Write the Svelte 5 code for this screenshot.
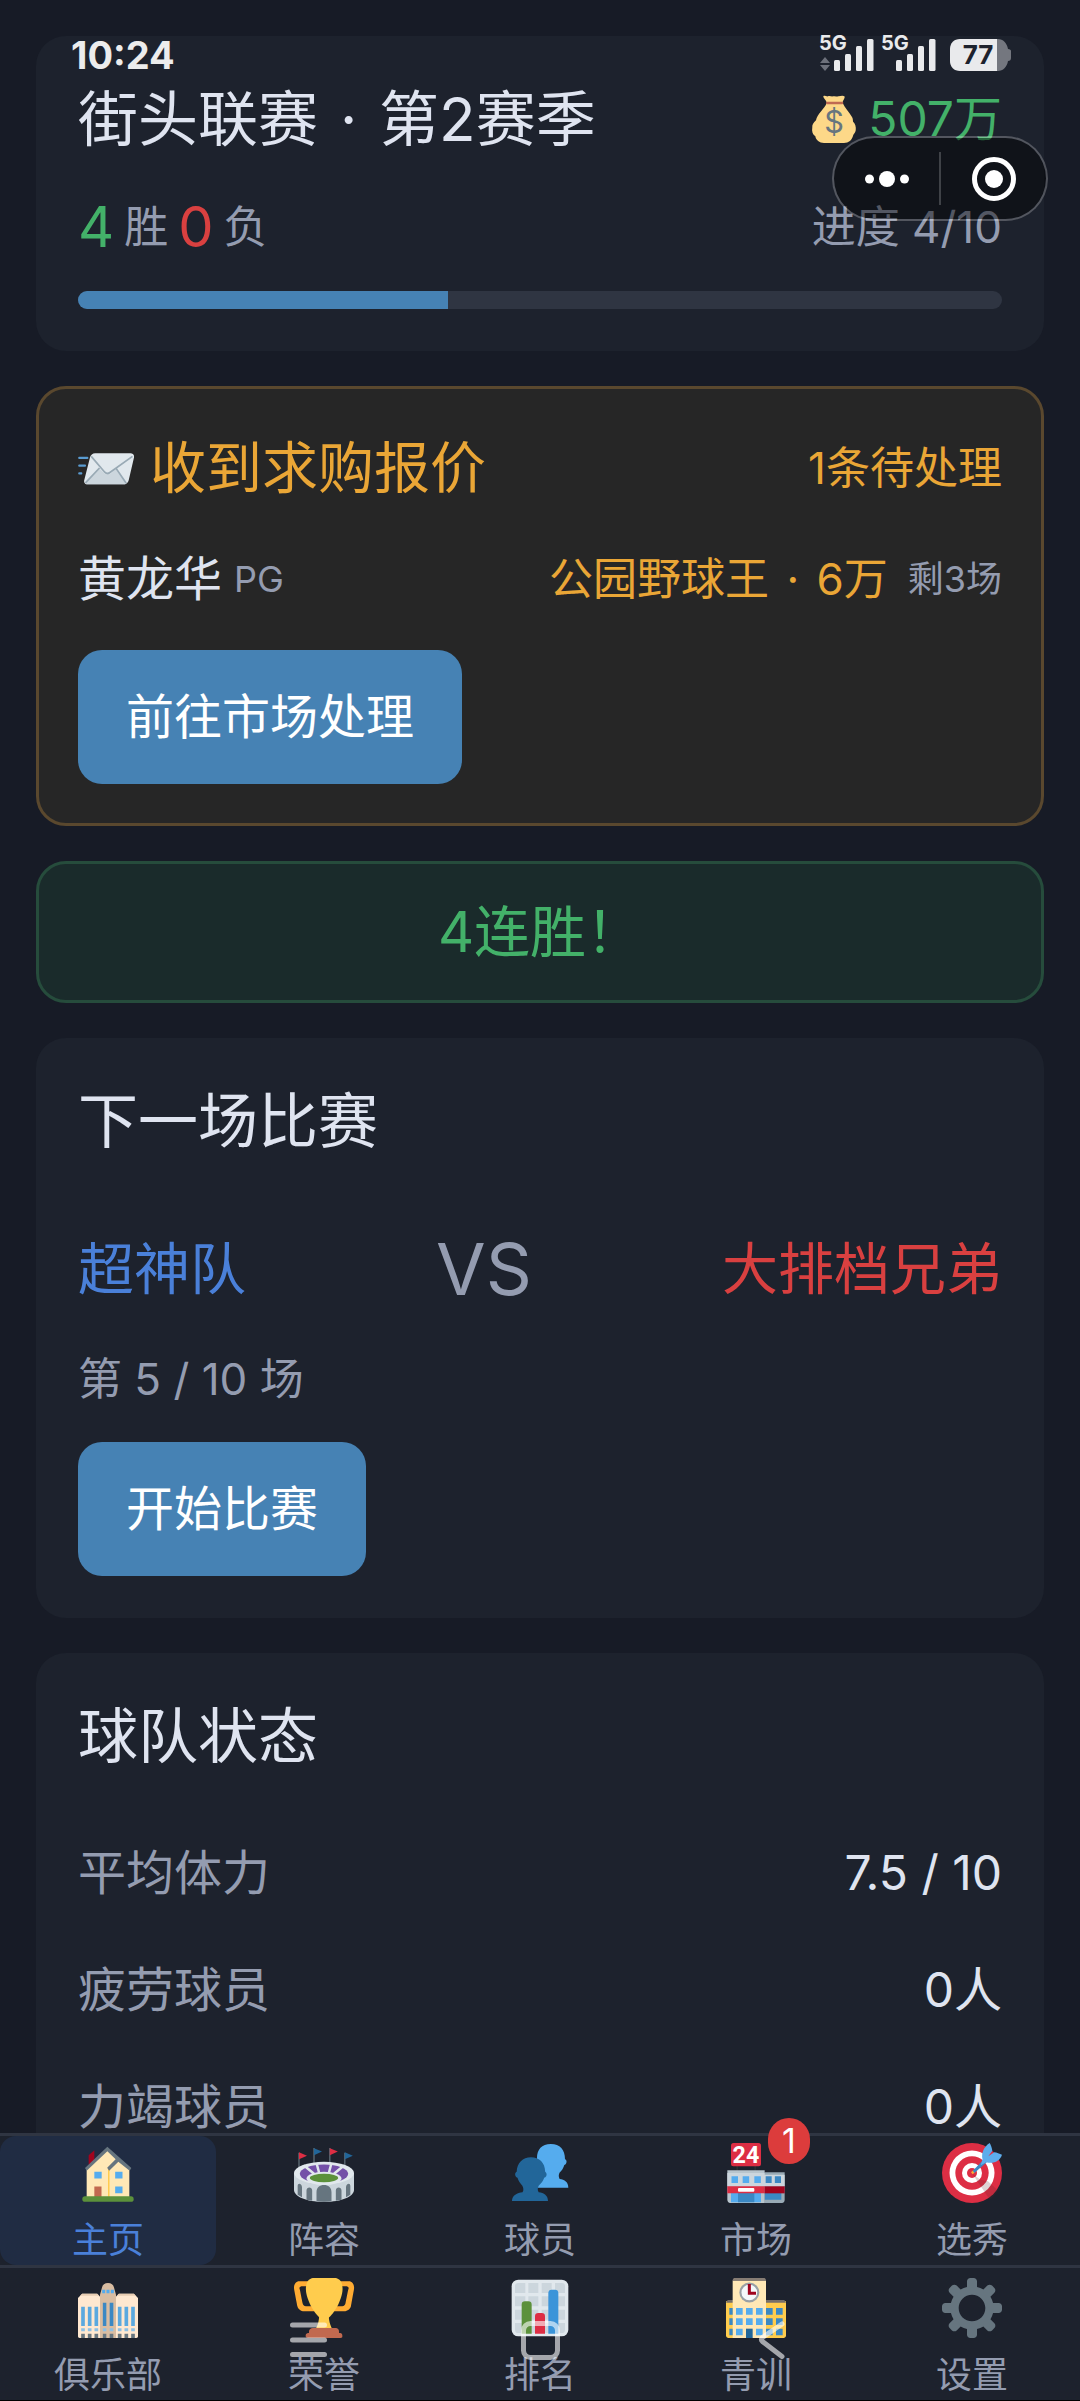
<script>
  let season = $state({
    league: "街头联赛",
    name: "第2赛季",
    money: "507万",
    wins: 4,
    losses: 0,
    played: 4,
    total: 10
  });

  let offers = $state([
    { id: 1, player: "黄龙华", position: "PG", club: "公园野球王", price: "6万", left: 3 }
  ]);

  let nextMatch = $state({ home: "超神队", away: "大排档兄弟", round: 5 });

  const teamStatus = [
    { label: "平均体力", value: "7.5 / 10" },
    { label: "疲劳球员", value: "0人" },
    { label: "力竭球员", value: "0人" }
  ];

  const navRows = [
    [
      { id: "home", label: "主页" },
      { id: "lineup", label: "阵容" },
      { id: "players", label: "球员" },
      { id: "market", label: "市场" },
      { id: "draft", label: "选秀" }
    ],
    [
      { id: "club", label: "俱乐部" },
      { id: "honor", label: "荣誉" },
      { id: "ranking", label: "排名" },
      { id: "youth", label: "青训" },
      { id: "settings", label: "设置" }
    ]
  ];

  let active = $state("home");

  let progress = $derived((season.played / season.total) * 100);
</script>

{#snippet signal(arrows)}
  <svg class="signal" viewBox="0 0 56 38" aria-hidden="true">
    <text x="0" y="16" class="net">5G</text>
    {#if arrows}
      <path fill="#6d717b" d="M6 23l5 6H1zM6 37l5-6H1z" />
    {/if}
    <g fill="#e9eaec">
      <rect x="15" y="26" width="6" height="11" rx="1.5" />
      <rect x="26" y="20" width="6" height="17" rx="1.5" />
      <rect x="37" y="12" width="6" height="25" rx="1.5" />
      <rect x="48" y="5" width="6.500" height="32" rx="1.5" />
    </g>
  </svg>
{/snippet}

{#snippet tabIcon(id)}
  <svg class="tab-icon" viewBox="0 0 36 36" aria-hidden="true">
    {#if id === "home"}
      <path fill="#a0041e" d="M6.400 13V7.300l3.400-3V11z" />
      <path fill="#ffe8b6" d="M5.200 15L17.600 3.200 30.800 15v17.500H5.200z" />
      <path fill="#ffcc4d" d="M18 15.500h.9v17H18z" />
      <path fill="#66757f" d="M17.600 2.300L4.200 15l1 1.600L17.600 5l5 4.700-5.100 5.200 1.200 1.700 5.500-5.300 6.800 5.300 1-1.600z" />
      <path fill="#55acee" d="M9.800 17.300h4.400v4H9.800zM22.300 17.300h4.400v4h-4.400zM22.300 26.100h4.400v4h-4.400z" />
      <path fill="#c1694f" d="M9.800 26.100h4.300v6.400H9.800z" />
      <rect x="2.600" y="32" width="30.800" height="3.300" rx="1.600" fill="#5c913b" />
    {:else if id === "lineup"}
      <path fill="none" stroke="#66757f" stroke-width=".7" d="M3 5.800v9M12 3v9M21.500 3v9M30.500 5.800v9" />
      <path fill="#dd2e44" d="M3 5.600l4.800 2L3 9.800zM21.500 3.100l4.800 2-4.800 2.200z" />
      <path fill="#226699" d="M12 3.100l4.800 2-4.800 2.200zM30.500 5.600l4.800 2-4.800 2.200z" />
      <path fill="#ccd6dd" d="M0 18h36v10c0 4-7 7.300-18 7.300S0 32 0 28z" />
      <ellipse cx="18" cy="18" rx="18" ry="6.700" fill="#e1e8ed" />
      <ellipse cx="18" cy="18.500" rx="14.500" ry="5.600" fill="#7450a8" />
      <path stroke="#e1e8ed" stroke-width="1.500" fill="none" d="M6 13.500l6 5M13.500 12l1.600 6M22.500 12l-1.600 6M30 13.500l-6 5" />
      <ellipse cx="18" cy="21.300" rx="10.500" ry="4" fill="#e1e8ed" />
      <ellipse cx="18" cy="21" rx="8.500" ry="2.500" fill="#5c913b" />
      <path fill="#66757f" d="M13.500 35V29.500c0-2.800 2-4.300 4.500-4.300s4.500 1.500 4.500 4.300V35c-3 .3-6 .3-9 0zM7.500 34v-5.500c0-2.500 3.400-2.500 3.400 0v6.200zM25.100 34.700v-6.200c0-2.500 3.400-2.500 3.400 0V34zM2.200 31v-5.200c0-2.200 2.600-1.500 2.600.8V32.600zM31.200 32.600v-6c0-2.300 2.600-3 2.600-.8V31z" />
    {:else if id === "players"}
      <path fill="#55acee" d="M35 26.800c0-3.400-2.300-4.800-5.200-5.200-.8-1.300-.6-2.600-.1-3.700 1.400-1.300 2.400-3 2.900-4.700.9-.2 1.500-1.300 1.300-2.400-.1-.6-.8-1-.9-1.200C33 4 30 .6 24.500.6 19 .6 16.200 4 16.200 9v17.800z" />
      <path fill="#226699" d="M22.800 34.800c0-3.500-2.400-4.900-5.600-5.300-.9-1.400-.5-2.900.1-4 1.500-1.400 2.600-2.900 3.200-4.700 1-.3 1.700-1.300 1.400-2.400-.1-.7-.6-.9-.8-1.200-.1-5.300-3.500-8.600-8.500-8.600S4.200 12 4 17.300c-.3.300-.8.500-.9 1.200-.2 1.100.5 2.100 1.400 2.400.6 1.800 1.500 3.300 2.900 4.700.6 1.100 1 2.600.1 4-3.100.4-6.300 1.700-6.300 5.200z" />
    {:else if id === "market"}
      <path fill="#292f33" d="M6.200 13h1v4h-1zM17 13h1v4h-1z" />
      <rect x="3" y="0" width="18" height="14" rx="1.500" fill="#dd2e44" />
      <text x="12" y="12" class="sign">24</text>
      <path fill="#99aab5" d="M23 17.600h12.200V34c0 1-.6 2-1.600 2H23z" />
      <path fill="#b8c5cd" d="M.8 16.300h22.400V36H2.500C1.500 36 .8 35 .8 34z" />
      <path fill="#ccd6dd" d="M.8 18h22.400v8H.8zM23.200 19h12v7h-12z" />
      <path fill="#55acee" d="M3.300 20h3.900v4H3.300zM10 20h3.900v4H10zM17 20h3.900v4H17zM3 30h18v5.500H3z" />
      <path fill="#3b88c3" d="M23.800 20h3.600v4h-3.600zM29.300 20h3.700v4h-3.700zM7.200 30H17v5.500H7.200zM23.300 30h9.900v4h-9.900z" />
      <path fill="#dd2e44" d="M.8 26h22.400v4.200H.8z" />
      <path fill="#a0041e" d="M23.200 26h12v4.200h-12z" />
      <rect x="7.200" y="27" width="9.800" height="2.200" rx=".6" fill="#fff" />
    {:else if id === "draft"}
      <circle cx="18" cy="18" r="18" fill="#dd2e44" />
      <circle cx="18" cy="18" r="13.500" fill="#fff" />
      <circle cx="18" cy="18" r="10" fill="#dd2e44" />
      <circle cx="18" cy="18" r="6" fill="#fff" />
      <circle cx="18" cy="18" r="3" fill="#dd2e44" />
      <path fill="#58222a" opacity=".2" d="M18.200 18.500l10.500 15.500c2-1.400 3.700-3.300 4.900-5.500l-6-5.500-4.500-1z" />
      <path fill="#ffac33" d="M17.400 17.500l1.700-1.500 1 1.200-1.700 1.500z" />
      <path fill="#3b88c3" d="M18.500 16.700l6.700-6.900 1.800 1.600-7.600 6.600z" />
      <path fill="#5dadec" d="M24.300 9.700c-.8-3.500.6-7.300 4.300-9.700.8 1.400 1.400 3 1.600 4.600l-2.400 3.300 3.500-2.400c1.500.2 3.300.8 4.700 1.600-1.400 4.200-5.500 5.600-9.500 4.400l-3.300 1.800z" />
    {:else if id === "club"}
      <path fill="#ffe8d0" d="M0 12l2.500-2.600h9L14 12v24H1c-.6 0-1-.4-1-1zM22 12l2.500-2.600h9L36 12v23c0 .6-.4 1-1 1H22z" />
      <path fill="#e8cdb2" d="M1.200 10.700l1.300-1.300h9l1.300 1.300zM23.200 10.700l1.300-1.300h9l1.300 1.300z" />
      <path fill="#d9bda2" d="M13.200 10l1.200-4.300C14.800 4 16 3 18 3s3.200 1 3.600 2.700L22.800 10v26h-9.600z" />
      <path fill="#55acee" d="M14.500 7h1.800v2.200h-1.800zM17.100 7h1.800v2.200h-1.800zM19.700 7h1.800v2.200h-1.800z" />
      <path fill="#5ba9df" d="M1.900 17.200h2.200v11.600H1.900zM5.900 17.200h2.200v11.600H5.900zM9.900 17.200h2.200v11.600H9.900zM23.900 17.200h2.200v11.600h-2.200zM27.900 17.200h2.200v11.600h-2.200zM31.900 17.200h2.200v11.600h-2.200z" />
      <path fill="#3b88c3" d="M14.900 14.800H17v14h-2.100zM19 14.800h2.200v14H19z" />
      <path fill="#8ec0e4" d="M1.900 30.200h2.200v1.700H1.900zM5.900 30.200h2.200v1.700H5.900zM9.900 30.200h2.200v1.700H9.900zM23.900 30.200h2.200v1.700h-2.200zM27.900 30.200h2.200v1.700h-2.200zM31.900 30.200h2.200v1.700h-2.200zM14.900 30.200H17v1.700h-2.100zM19 30.200h2.200v1.700H19z" />
      <path fill="#66757f" d="M1.900 33.500h2.200V36H1.900zM5.900 33.500h2.200V36H5.900zM9.900 33.500h2.200V36H9.900zM14.900 33.500H17V36h-2.100zM19 33.500h2.200V36H19zM23.900 33.500h2.200V36h-2.200zM27.900 33.500h2.200V36h-2.200zM31.900 33.500h2.200V36h-2.200z" />
    {:else if id === "honor"}
      <path fill="#ffac33" d="M5.123 5h6C12.227 5 13 4.896 13 6V4c0-1.104-.773-2-1.877-2h-8c-2 0-3.583 2.125-3 5 0 0 1.791 9.375 1.917 9.958C2.373 18.500 4.164 20 6.081 20h6.958c1.105 0-.039-1.896-.039-3v-2c0 1.104-.773 2-1.877 2h-4c-1.104 0-1.833-1.042-2-2S3.539 7 3.539 7C2.873 5.750 3.539 5 5.123 5zm25.812 0h-6C23.831 5 22 4.896 22 6V4c0-1.104 1.831-2 2.935-2h8c2 0 3.584 2.125 3 5 0 0-1.633 9.419-1.771 10-.354 1.500-2.042 3-4 3h-7.146C21.914 20 22 18.104 22 17v-2c0 1.104 1.831 2 2.935 2h4c1.104 0 1.834-1.042 2-2s1.584-8 1.584-8C33.184 5.750 32.519 5 30.935 5z" />
      <path fill="#ffcc4d" d="M20.832 22c0-6.958-2.709 0-2.709 0s-3-6.958-3 0-3.291 10-3.291 10h12.292s-3.292-3.042-3.292-10z" />
      <path fill="#ffcc4d" d="M29.123 6.577c0 6.775-6.770 18.423-11 18.423-4.231 0-11-11.648-11-18.423 0-5.582 3-6.577 5-6.577h12c2 0 5 .995 5 6.577z" />
      <path fill="#c1694f" d="M27 33H9v-1c0-1.104 1.164-2 2.206-2h13.917c1.042 0 1.877.896 1.877 2v1z" />
      <path fill="#c1694f" d="M29 34.625c0 .760.165 1.375-1.252 1.375H8.498C7.206 36 7 35.385 7 34.625v-.25C7 33.615 7.738 33 8.498 33h19.250c.759 0 1.252.615 1.252 1.375v.25z" />
    {:else if id === "ranking"}
      <rect x="1" y="1" width="34" height="34" rx="4" fill="#e1e8ed" />
      <path fill="#ccd6dd" d="M5 3h4.200v6H3V5a2 2 0 0 1 2-2zM11 3h6v6h-6zM19 3h6v6h-6zM27 3h4a2 2 0 0 1 2 2v4h-6zM3 11h6.200v6H3zM11 11h6v6h-6zM19 11h6v6h-6zM27 11h6v6h-6zM3 19h6.200v6H3zM11 19h6v6h-6zM19 19h6v6h-6zM27 19h6v6h-6zM3 27h6.200v6H5a2 2 0 0 1-2-2zM11 27h6v6h-6zM19 27h6v6h-6zM27 27h6v4a2 2 0 0 1-2 2h-4z" />
      <path fill="#5c913b" d="M13 33.500H7V16a2 2 0 0 1 2-2h2a2 2 0 0 1 2 2z" />
      <path fill="#dd2e44" d="M21 33.500h-6V23a2 2 0 0 1 2-2h2a2 2 0 0 1 2 2z" />
      <path fill="#3b94d9" d="M29 33.500h-6V9a2 2 0 0 1 2-2h2a2 2 0 0 1 2 2z" />
    {:else if id === "youth"}
      <path fill="#ffcc4d" d="M0 14h36v20.500c0 .8-.7 1.500-1.500 1.500h-33C.7 36 0 35.300 0 34.500z" />
      <path fill="#776f68" d="M1 13.200h34l1 1.600H0z" />
      <path fill="#ffe8b6" d="M4 1.500h20V36H4z" />
      <path fill="#877d74" d="M5 0h18c.6 0 1 .9 1 1.700H4C4 .9 4.400 0 5 0z" />
      <circle cx="14" cy="8.700" r="6" fill="#99a0a5" />
      <circle cx="14" cy="8.700" r="4.700" fill="#f5f8fa" />
      <path fill="none" stroke="#a0041e" stroke-width="1.800" d="M14 3.600v5.500h4" />
      <path fill="#55acee" d="M6 18h4v4H6zM12 18h4v4h-4zM18 18h4v4h-4zM6 24.200h4v4H6zM12 24.200h4v4h-4zM18 24.200h4v4h-4zM6 30.400h4v4H6zM18 30.400h4v4h-4z" />
      <path fill="#3b88c3" d="M2 18h2v4H2zM24 18h4v4h-4zM30 18h4v4h-4zM2 24.200h2v4H2zM24 24.200h4v4h-4zM30 24.200h4v4h-4zM2 30.400h2v4H2zM24 30.400h4v4h-4zM30 30.400h4v4h-4z" />
      <path fill="#226699" d="M12 30.400h4V36h-4z" />
    {:else}
      <path fill="#66757f" d="M34 15h-3.362c-.324-1.369-.864-2.651-1.582-3.814l2.379-2.379c.781-.781.781-2.048 0-2.829l-1.414-1.414c-.781-.781-2.047-.781-2.828 0l-2.379 2.379C23.650 6.225 22.369 5.686 21 5.362V2c0-1.104-.896-2-2-2h-2c-1.104 0-2 .896-2 2v3.362c-1.369.324-2.651.864-3.814 1.582L8.808 4.565c-.781-.781-2.048-.781-2.828 0L4.565 5.979c-.781.781-.781 2.048-.001 2.829l2.379 2.379C6.225 12.350 5.686 13.632 5.362 15H2c-1.104 0-2 .896-2 2v2c0 1.104.896 2 2 2h3.362c.324 1.368.864 2.650 1.582 3.813l-2.379 2.379c-.780.780-.780 2.048.001 2.829l1.414 1.414c.780.780 2.047.780 2.828 0l2.379-2.379c1.163.719 2.445 1.258 3.814 1.582V34c0 1.104.896 2 2 2h2c1.104 0 2-.896 2-2v-3.362c1.368-.324 2.650-.864 3.813-1.582l2.379 2.379c.781.781 2.047.781 2.828 0l1.414-1.414c.781-.781.781-2.048 0-2.829l-2.379-2.379c.719-1.163 1.258-2.445 1.582-3.814H34c1.104 0 2-.896 2-2v-2C36 15.896 35.104 15 34 15zM18 26c-4.418 0-8-3.582-8-8s3.582-8 8-8 8 3.582 8 8-3.582 8-8 8z" />
    {/if}
  </svg>
{/snippet}

<div class="screen">
  <main class="content">
    <section class="card">
      <div class="row">
        <h1>{season.league} <span class="dot">·</span> {season.name}</h1>
        <span class="money">
          <svg class="bag" viewBox="0 0 36 36" aria-hidden="true">
            <path fill="#fdd888" d="M10 1c1-1 2.300.3 3.500 0 1.500-.6 2.500.4 4 0 1.500-.5 2.500.4 4 0 1.300-.3 3.500-1 4.500.2.300 1.300-1.200 2.600-1.600 4.300h-12C12 3.700 9.800 2.300 10 1z" />
            <path fill="#fdd888" d="M12.500 6h12c1.500 3.500 5 7 7 10.500.8 1.300.6 2.500.8 3.500 1.500 1.300 2.400 3.600 2 6.500-.3 2-1.600 2.600-1.900 3.700C31.500 34 29 36 25.500 36h-15C7 36 4.500 34 4 31c-2-1.300-2.800-4-2.300-6.500C1.500 22.300 2.600 21 4.500 19c.8-5 6.500-8.500 8-13z" />
            <rect x="12" y="5" width="13" height="2" rx="1" fill="#bf6952" />
            <text x="18" y="28.500" class="dollar">$</text>
          </svg>
          {season.money}
        </span>
      </div>
      <div class="row record">
        <div class="score">
          <span class="num win">{season.wins}</span>
          <span>胜</span>
          <span class="num loss">{season.losses}</span>
          <span>负</span>
        </div>
        <span>进度 {season.played}/{season.total}</span>
      </div>
      <div class="bar" role="progressbar" aria-label="进度" aria-valuenow={progress} aria-valuemin="0" aria-valuemax="100">
        <div class="fill" style="width: {progress}%"></div>
      </div>
    </section>

    <section class="card offer">
      <div class="row">
        <h2>
          <svg class="mail" viewBox="0 0 36 36" aria-hidden="true">
            <path fill="#e1e8ed" d="M11 8.500h22.800c1.600 0 2.500 1.200 2.200 2.700l-3.400 14.600c-.4 1.600-1.700 2.700-3.300 2.700H6c-1.500 0-2.400-1.200-2-2.700l3.700-14.600c.4-1.600 1.700-2.700 3.300-2.700z" />
            <path fill="#ccd6dd" d="M4.600 27.600L13.500 18l3.300 3.300c1.200 1.100 3 1.200 4.300.2l3.900-3.300 5.600 9.900c-.4.200-.8.400-1.300.4H6c-.6 0-1-.3-1.400-.9z" />
            <path fill="none" stroke="#99aab5" stroke-width="1.100" d="M8.500 10.500l8.700 10.200c.9.900 2.300 1 3.300.2L35 10.500M4.800 27.600L13.800 18M31 27.800l-6.400-9.400" />
            <path fill="none" stroke="#5a9bd0" stroke-width="1.400" stroke-linecap="round" d="M.8 11.500h5.200M.8 16.500h3.700M.8 21.500h1.300" />
          </svg>
          收到求购报价
        </h2>
        <span>{offers.length}条待处理</span>
      </div>
      {#each offers as offer (offer.id)}
        <div class="row offer-row">
          <div class="player">
            <span class="name">{offer.player}</span>
            <span class="small">{offer.position}</span>
          </div>
          <div class="bid">
            <span>{offer.club} <span class="dot">·</span> {offer.price}</span>
            <span class="small">剩{offer.left}场</span>
          </div>
        </div>
      {/each}
      <button class="btn">前往市场处理</button>
    </section>

    <section class="card streak">4连胜！</section>

    <section class="card">
      <h1>下一场比赛</h1>
      <div class="row match">
        <span class="home">{nextMatch.home}</span>
        <span class="vs">VS</span>
        <span class="away">{nextMatch.away}</span>
      </div>
      <p class="round">第 {nextMatch.round} / {season.total} 场</p>
      <button class="btn">开始比赛</button>
    </section>

    <section class="card">
      <h1>球队状态</h1>
      <dl>
        {#each teamStatus as item}
          <div class="row">
            <dt>{item.label}</dt>
            <dd>{item.value}</dd>
          </div>
        {/each}
      </dl>
    </section>
  </main>

  <nav>
    {#each navRows as tabs}
      <div class="tabs">
        {#each tabs as tab (tab.id)}
          <a
            href="#{tab.id}"
            class="tab"
            class:active={active === tab.id}
            onclick={() => (active = tab.id)}
          >
            <span class="icon-wrap">
              {@render tabIcon(tab.id)}
              {#if tab.id === "market" && offers.length}
                <span class="badge">{offers.length}</span>
              {/if}
            </span>
            {tab.label}
          </a>
        {/each}
      </div>
    {/each}
  </nav>

  <!-- phone status bar -->
  <div class="status">
    <span class="time">10:24</span>
    <div class="indicators">
      {@render signal(true)}
      {@render signal(false)}
      <svg class="battery" viewBox="0 0 61 34" aria-hidden="true">
        <path fill="#74777f" d="M47 1h1c5 0 9 4 10 10 2 0 3 1 3 2v7c0 2-1 3-3 3-1 6-5 10-10 10h-1z" />
        <path fill="#e9eaec" d="M10 1h37v32H10C4 33 0 29 0 23V11C0 5 4 1 10 1z" />
        <text x="28" y="26" class="level">77</text>
      </svg>
    </div>
  </div>

  <!-- mini program menu -->
  <div class="capsule">
    <button aria-label="更多">
      <svg viewBox="0 0 44 44" aria-hidden="true">
        <circle cx="4.500" cy="22" r="4.500" />
        <circle cx="22" cy="22" r="8" />
        <circle cx="39.500" cy="22" r="4.500" />
      </svg>
    </button>
    <button aria-label="关闭">
      <svg viewBox="0 0 44 44" aria-hidden="true">
        <circle cx="22" cy="22" r="19.500" class="ring" />
        <circle cx="22" cy="22" r="9" />
      </svg>
    </button>
  </div>

  <!-- system navigation keys -->
  <div class="keys">
    <svg viewBox="0 0 40 40" aria-hidden="true"><path d="M4.500 5h32M4.500 20h32M4.500 34.500h32" /></svg>
    <svg viewBox="0 0 40 40" aria-hidden="true"><rect x="3.500" y="3.500" width="34" height="34" rx="7" /></svg>
    <svg viewBox="0 0 40 40" aria-hidden="true"><path d="M30 4L10.500 17.500q-2 2 0 4L30 36.500" /></svg>
  </div>
</div>

<style>
  :global(body) {
    background: #171b26;
  }

  .screen {
    position: relative;
    display: flex;
    flex-direction: column;
    height: 100vh;
    overflow: hidden;
    background: #171b26;
    color: #dfe4f0;
    font-family: Inter, "Noto Sans CJK SC", sans-serif;
    font-size: 44px;
    line-height: 62px;
  }

  .content {
    flex: 1;
    min-height: 0;
    overflow: hidden;
    display: flex;
    flex-direction: column;
    gap: 35px;
    padding: 36px 36px 0;
  }

  .card {
    flex-shrink: 0;
    padding: 42px;
    border-radius: 30px;
    background: #1d222d;
  }

  .row {
    display: flex;
    align-items: center;
    justify-content: space-between;
  }

  h1,
  h2,
  p,
  dl,
  dd {
    margin: 0;
    font-weight: 400;
  }

  h1 {
    font-size: 60px;
    line-height: 82px;
  }

  h2 {
    display: flex;
    align-items: center;
    gap: 16px;
    font-size: 56px;
    line-height: 80px;
  }

  .dot {
    margin: 0 5px;
  }

  .money {
    display: flex;
    align-items: center;
    gap: 10px;
    color: #43b169;
    font-size: 48px;
  }

  .bag {
    width: 48px;
    height: 48px;
  }

  .mail {
    width: 56px;
    height: 56px;
  }

  .dollar {
    fill: #67757f;
    font-size: 23px;
    text-anchor: middle;
  }

  .record {
    margin: 29px 0 26px;
    color: #949cb0;
    line-height: 76px;
  }

  .score {
    display: flex;
    gap: 10px;
  }

  .num {
    font-size: 56px;
  }

  .win {
    color: #43b169;
  }

  .loss {
    color: #d94040;
  }

  .bar {
    height: 18px;
    border-radius: 9px;
    background: #2f3542;
    overflow: hidden;
  }

  .fill {
    height: 100%;
    background: #4682b4;
  }

  .offer {
    padding: 39px;
    border: 3px solid #5a482e;
    background: #262626;
    color: #eaa636;
  }

  .offer-row {
    margin: 37px 0;
    line-height: 68px;
  }

  .player {
    display: flex;
    gap: 12px;
  }

  .bid {
    display: flex;
    gap: 20px;
  }

  .name {
    color: #dfe4f0;
    font-size: 48px;
  }

  .small {
    color: #949cb0;
    font-size: 36px;
  }

  .btn {
    display: block;
    padding: 33px 48px;
    border: 0;
    border-radius: 24px;
    background: #4682b4;
    color: #fff;
    font-family: inherit;
    font-size: 48px;
    line-height: 68px;
  }

  .streak {
    padding: 28px;
    border: 3px solid #264c3c;
    background: #1a2b2b;
    color: #43b169;
    font-size: 56px;
    line-height: 80px;
    text-align: center;
  }

  .match {
    margin: 57px 0 29px;
    font-size: 56px;
    line-height: 100px;
  }

  .home {
    color: #4a80d9;
  }

  .vs {
    color: #949cb0;
    font-size: 72px;
  }

  .away {
    color: #d94040;
  }

  .round {
    margin-bottom: 32px;
    color: #949cb0;
  }

  dl {
    margin-top: 37px;
    font-size: 48px;
    line-height: 117px;
  }

  dt {
    color: #949cb0;
  }

  nav {
    flex-shrink: 0;
    border-bottom: 1px solid #000;
    background: #1d222d;
  }

  .tabs {
    display: flex;
    border-top: 3px solid #2f3542;
  }

  .tabs + .tabs {
    padding-top: 3px;
  }

  .tab {
    flex: 1;
    display: flex;
    flex-direction: column;
    align-items: center;
    gap: 12px;
    padding-top: 7px;
    border-radius: 16px;
    color: #949cb0;
    font-size: 36px;
    line-height: 50px;
    text-decoration: none;
  }

  .tab.active {
    background: #202c43;
    color: #4a80d9;
  }

  .icon-wrap {
    position: relative;
    height: 60px;
  }

  .tab-icon {
    display: block;
    width: 60px;
    height: 60px;
    overflow: visible;
  }

  .sign {
    fill: #fff;
    font-family: Roboto, sans-serif;
    font-size: 14px;
    font-weight: 700;
    text-anchor: middle;
  }

  .badge {
    position: absolute;
    top: -25px;
    left: 42px;
    width: 42px;
    border-radius: 23px;
    background: #dc3c3c;
    color: #fff;
    font-size: 34px;
    line-height: 46px;
    text-align: center;
  }

  .status {
    position: absolute;
    top: 0;
    left: 0;
    right: 0;
    display: flex;
    align-items: flex-end;
    justify-content: space-between;
    padding: 34px 69px 0 71px;
  }

  .time {
    color: #ececec;
    font-size: 38px;
    font-weight: 700;
    line-height: 34px;
  }

  .indicators {
    display: flex;
    align-items: flex-end;
    gap: 6px;
  }

  .signal {
    width: 56px;
    height: 38px;
    overflow: visible;
  }

  .net {
    fill: #e9eaec;
    font-size: 20px;
    font-weight: 700;
  }

  .battery {
    width: 61px;
    height: 34px;
    margin-left: 7px;
  }

  .level {
    fill: #1d222d;
    font-size: 26px;
    font-weight: 700;
    text-anchor: middle;
  }

  .capsule {
    position: absolute;
    top: 136px;
    right: 32px;
    display: flex;
    width: 216px;
    height: 85px;
    box-sizing: border-box;
    padding: 14px 0;
    border: 2px solid rgba(255, 255, 255, 0.24);
    border-radius: 43px;
    background: rgba(0, 0, 0, 0.44);
    background-clip: padding-box;
  }

  .capsule button {
    flex: 1;
    display: flex;
    align-items: center;
    justify-content: center;
    padding: 0;
    border: 0;
    background: none;
  }

  .capsule button + button {
    border-left: 2px solid rgba(255, 255, 255, 0.2);
  }

  .capsule svg {
    width: 44px;
    height: 44px;
    fill: #fff;
  }

  .capsule .ring {
    fill: none;
    stroke: #fff;
    stroke-width: 5;
  }

  .keys {
    position: absolute;
    left: 0;
    right: 0;
    bottom: 41px;
    display: flex;
    justify-content: space-evenly;
    padding: 0 96px;
    pointer-events: none;
  }

  .keys svg {
    width: 40px;
    height: 40px;
    fill: none;
    stroke: rgba(255, 255, 255, 0.6);
    stroke-width: 5;
    stroke-linecap: round;
  }
</style>
